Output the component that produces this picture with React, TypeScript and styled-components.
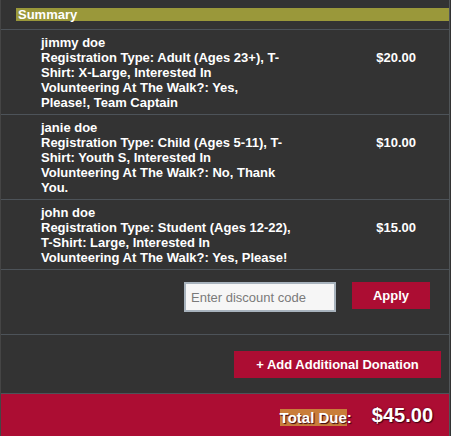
import React from 'react';
import styled, {createGlobalStyle} from 'styled-components';

const Colors = {
  Panel: '#333333',
  Olive: '#9a983a',
  Crimson: '#ac0d33',
  Divider: '#4d5359',
  White: '#ffffff',
};

const GlobalStyle = createGlobalStyle`
  html, body {
    margin: 0;
    padding: 0;
    background: ${Colors.Panel};
  }
  body {
    font-family: "Liberation Sans", Arial, sans-serif;
  }
`;

const Panel = styled.div`
  box-sizing: border-box;
  width: 450px;
  height: 436px;
  background-color: ${Colors.Panel};
  border-left: 1px solid #454545;
  border-right: 1px solid #505558;
  padding-top: 8px;
  display: flex;
  flex-direction: column;
  color: ${Colors.White};
`;

const Header = styled.div`
  margin-left: 15px;
  margin-bottom: 8px;
  height: 13px;
  line-height: 13px;
  padding-left: 2px;
  background-color: ${Colors.Olive};
  font-size: 13px;
  font-weight: bold;
`;

const Item = styled.div`
  display: flex;
  flex-direction: row;
  border-top: 1px solid ${Colors.Divider};
  padding: 5px 33px 4px 40px;
  font-size: 13px;
  font-weight: bold;
  line-height: 15px;
`;

const ItemText = styled.div`
  width: 252px;
`;

const TextLine = styled.div`
  white-space: nowrap;
`;

const ItemPrice = styled.div`
  margin-left: auto;
  padding-top: 15px;
`;

const DiscountRow = styled.div`
  display: flex;
  flex-direction: row;
  justify-content: flex-end;
  align-items: flex-start;
  gap: 16px;
  border-top: 1px solid ${Colors.Divider};
  padding: 12px 19px 22px 0;
`;

const DiscountInput = styled.input`
  box-sizing: border-box;
  width: 152px;
  height: 30px;
  border: 2px solid #a8b3bd;
  background: #f6f6f6;
  padding: 0 5px;
  font-family: "Liberation Sans", Arial, sans-serif;
  font-size: 13px;
  color: #333;
  outline: none;
  &::placeholder {
    color: #7a7a7a;
  }
`;

const RedButton = styled.button`
  box-sizing: border-box;
  height: 27px;
  width: ${(props: {width: number}) => props.width}px;
  border: none;
  background-color: ${Colors.Crimson};
  color: ${Colors.White};
  font-family: "Liberation Sans", Arial, sans-serif;
  font-size: 13px;
  font-weight: bold;
  padding: 0;
`;

const DonationRow = styled.div`
  display: flex;
  flex-direction: row;
  justify-content: flex-end;
  border-top: 1px solid ${Colors.Divider};
  padding: 16px 8px 15px 0;
`;

const TotalBar = styled.div`
  flex: 1;
  display: flex;
  flex-direction: row;
  justify-content: flex-end;
  align-items: center;
  gap: 20px;
  border-top: 1px solid ${Colors.Divider};
  background-color: ${Colors.Crimson};
  padding: 0 16px 0 0;
  text-shadow: 1px 1px 1px #3a0010;
`;

const TotalLabel = styled.span`
  font-size: 15px;
  font-weight: bold;
  margin-top: 5px;
`;

const Highlight = styled.span`
  background-color: #c97d3a;
`;

const TotalAmount = styled.span`
  font-size: 20px;
  font-weight: bold;
  text-shadow: 0 0 2px #5a0018, 1px 1px 1px #3a0010;
`;

type LineItem = {
  key: number;
  lines: string[];
  price: string;
};

// lines kept as the reference wraps them
const items: LineItem[] = [
  {
    key: 1,
    lines: [
      'jimmy doe',
      'Registration Type: Adult (Ages 23+), T-',
      'Shirt: X-Large, Interested In',
      'Volunteering At The Walk?: Yes,',
      'Please!, Team Captain',
    ],
    price: '$20.00',
  },
  {
    key: 2,
    lines: [
      'janie doe',
      'Registration Type: Child (Ages 5-11), T-',
      'Shirt: Youth S, Interested In',
      'Volunteering At The Walk?: No, Thank',
      'You.',
    ],
    price: '$10.00',
  },
  {
    key: 3,
    lines: [
      'john doe',
      'Registration Type: Student (Ages 12-22),',
      'T-Shirt: Large, Interested In',
      'Volunteering At The Walk?: Yes, Please!',
    ],
    price: '$15.00',
  },
];

const App = () => {
  return (
    <>
      <GlobalStyle/>
      <Panel>
        <Header>Summary</Header>
        {items.map(item => (
          <Item key={item.key}>
            <ItemText>
              {item.lines.map((line, i) => <TextLine key={i}>{line}</TextLine>)}
            </ItemText>
            <ItemPrice>{item.price}</ItemPrice>
          </Item>
        ))}
        <DiscountRow>
          <DiscountInput placeholder="Enter discount code"/>
          <RedButton width={78}>Apply</RedButton>
        </DiscountRow>
        <DonationRow>
          <RedButton width={207}>+ Add Additional Donation</RedButton>
        </DonationRow>
        <TotalBar>
          <TotalLabel><Highlight>Total Due</Highlight>:</TotalLabel>
          <TotalAmount>$45.00</TotalAmount>
        </TotalBar>
      </Panel>
    </>
  );
};

export default App;
